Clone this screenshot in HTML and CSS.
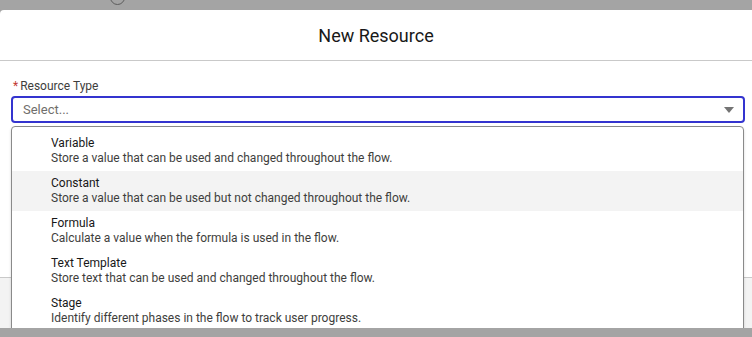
FILE: index.html
```html
<!DOCTYPE html>
<html lang="en">
	<head>
		<meta charset="UTF-8" />
		<title>New Resource</title>
		<link rel="stylesheet" href="styles.css">
	</head>
	<body>
		<div class="backdrop">
			<span class="node"></span>
		</div>
		<div class="modal">
			<header class="modal-header">
				<h2>New Resource</h2>
			</header>
			<div class="modal-body">
				<label class="field-label"><abbr class="required">*</abbr>Resource Type</label>
				<div class="combobox">
					<div class="combo-input">
						<span class="placeholder">Select...</span>
						<span class="caret"></span>
					</div>
					<ul class="listbox">
						<li class="option">
							<span class="option-title">Variable</span>
							<span class="option-meta">Store a value that can be used and changed throughout the flow.</span>
						</li>
						<li class="option active">
							<span class="option-title">Constant</span>
							<span class="option-meta">Store a value that can be used but not changed throughout the flow.</span>
						</li>
						<li class="option">
							<span class="option-title">Formula</span>
							<span class="option-meta">Calculate a value when the formula is used in the flow.</span>
						</li>
						<li class="option">
							<span class="option-title">Text Template</span>
							<span class="option-meta">Store text that can be used and changed throughout the flow.</span>
						</li>
						<li class="option">
							<span class="option-title">Stage</span>
							<span class="option-meta">Identify different phases in the flow to track user progress.</span>
						</li>
					</ul>
				</div>
			</div>
			<footer class="modal-footer"></footer>
		</div>
	</body>
</html>
```

FILE: styles.css
```css
body {
	font-family: Roboto, "Liberation Sans", sans-serif;
	background-color: #a4a4a4;
	margin: 0;
	overflow: hidden;
	color: #181818;
}
.backdrop {
	height: 10px;
	position: relative;
}
.node {
	position: absolute;
	left: 110px;
	top: -10px;
	width: 13px;
	height: 13px;
	border: 1.5px solid #5c5c5c;
	border-radius: 50%;
}
.modal {
	background: #fff;
	border-radius: 4px 0 0 0;
	margin-right: -10px;
}
.modal-header {
	height: 50px;
	border-bottom: 1px solid #c9c9c9;
	display: flex;
	align-items: center;
	justify-content: center;
	padding-right: 10px;
}
.modal-header h2 {
	margin: 0;
	font-size: 18px;
	font-weight: 400;
}
.modal-body {
	height: 216px;
	padding: 17px 17px 0 11px;
	box-sizing: border-box;
}
.field-label {
	display: block;
	font-size: 12px;
	color: #3e3e3c;
	line-height: 16px;
	margin-bottom: 2px;
	padding-left: 2px;
}
.required {
	color: #c23934;
	text-decoration: none;
	margin-right: 2px;
	font-size: 12px;
}
.combobox {
	position: relative;
}
.combo-input {
	height: 27px;
	box-sizing: border-box;
	border: 2px solid #3434cf;
	border-radius: 4px;
	display: flex;
	align-items: center;
	justify-content: space-between;
	padding: 0 9px 0 10px;
}
.placeholder {
	font-size: 13px;
	color: #706e6b;
}
.caret {
	width: 0;
	height: 0;
	border-left: 5px solid transparent;
	border-right: 5px solid transparent;
	border-top: 6px solid #747474;
}
.listbox {
	position: absolute;
	top: 30px;
	left: 0;
	right: 1px;
	margin: 0;
	padding: 4px 0 2px;
	list-style: none;
	background: #fff;
	border: 1px solid #8a8a8a;
	border-radius: 4px;
	box-shadow: 0 2px 3px rgba(0, 0, 0, 0.16);
	z-index: 10;
}
.option {
	height: 40px;
	box-sizing: border-box;
	padding: 4px 0 0 39px;
	display: flex;
	flex-direction: column;
}
.option.active {
	background: #f3f3f3;
}
.option-title {
	font-size: 12px;
	line-height: 16px;
	color: #181818;
}
.option-meta {
	font-size: 12px;
	line-height: 15px;
	color: #3e3e3c;
}
.modal-footer {
	height: 50px;
	background: #f3f3f3;
	border-top: 1px solid #c9c9c9;
}
```
